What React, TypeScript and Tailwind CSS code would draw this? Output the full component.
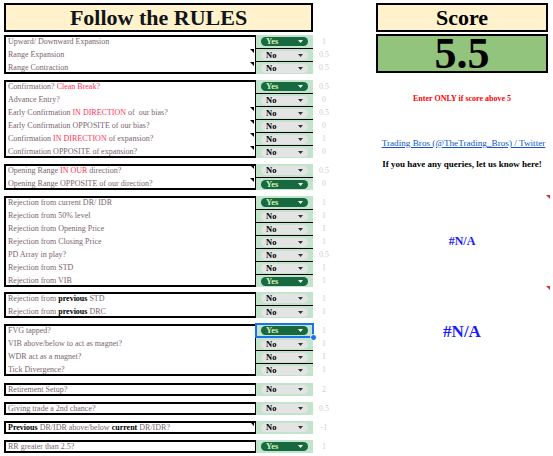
import type { ReactNode } from "react";

type Row = {
  label: ReactNode;
  yes: boolean;
  score: string;
  note?: boolean;
  selected?: boolean;
};

type Group = { mt: string; rows: Row[] };

const Red = ({ children }: { children: ReactNode }) => (
  <span className="text-[#ff3355]">{children}</span>
);

const B = ({ children }: { children: ReactNode }) => (
  <span className="font-bold text-black">{children}</span>
);

const groups: Group[] = [
  {
    mt: "mt-[3px]",
    rows: [
      { label: "Upward/ Downward Expansion", yes: true, score: "1" },
      { label: "Range Expansion", yes: false, score: "0.5", note: true },
      { label: "Range Contraction", yes: false, score: "0.5", note: true },
    ],
  },
  {
    mt: "mt-[6px]",
    rows: [
      {
        label: (
          <>
            Confirmation? <Red>Clean Break?</Red>
          </>
        ),
        yes: true,
        score: "0.5",
      },
      { label: "Advance Entry?", yes: false, score: "0" },
      {
        label: (
          <>
            Early Confirmation <Red>IN DIRECTION</Red> of&nbsp; our bias?
          </>
        ),
        yes: false,
        score: "0.5",
        note: true,
      },
      { label: "Early Confirmation OPPOSITE of our bias?", yes: false, score: "0", note: true },
      {
        label: (
          <>
            Confirmation <Red>IN DIRECTION</Red> of expansion?
          </>
        ),
        yes: false,
        score: "1",
        note: true,
      },
      { label: "Confirmation OPPOSITE of expansion?", yes: false, score: "0", note: true },
    ],
  },
  {
    mt: "mt-[6px]",
    rows: [
      {
        label: (
          <>
            Opening Range <Red>IN OUR</Red> direction?
          </>
        ),
        yes: false,
        score: "0.5",
        note: true,
      },
      { label: "Opening Range OPPOSITE of our direction?", yes: true, score: "0", note: true },
    ],
  },
  {
    mt: "mt-[6px]",
    rows: [
      { label: "Rejection from current DR/ IDR", yes: true, score: "1" },
      { label: "Rejection from 50% level", yes: false, score: "1" },
      { label: "Rejection from Opening Price", yes: false, score: "1" },
      { label: "Rejection from Closing Price", yes: false, score: "1" },
      { label: "PD Array in play?", yes: false, score: "0.5" },
      { label: "Rejection from STD", yes: false, score: "1" },
      { label: "Rejection from VIB", yes: true, score: "1" },
    ],
  },
  {
    mt: "mt-[5px]",
    rows: [
      {
        label: (
          <>
            Rejection from <B>previous</B> STD
          </>
        ),
        yes: false,
        score: "1",
      },
      {
        label: (
          <>
            Rejection from <B>previous</B> DRC
          </>
        ),
        yes: false,
        score: "1",
      },
    ],
  },
  {
    mt: "mt-[6px]",
    rows: [
      { label: "FVG tapped?", yes: true, score: "1", selected: true },
      { label: "VIB above/below to act as magnet?", yes: false, score: "1" },
      { label: "WDR act as a magnet?", yes: false, score: "1" },
      { label: "Tick Divergence?", yes: false, score: "1" },
    ],
  },
  { mt: "mt-[7px]", rows: [{ label: "Retirement Setup?", yes: false, score: "2" }] },
  { mt: "mt-[6px]", rows: [{ label: "Giving trade a 2nd chance?", yes: false, score: "0.5" }] },
  {
    mt: "mt-[6px]",
    rows: [
      {
        label: (
          <>
            <B>Previous</B> DR/IDR above/below <B>current</B> DR/IDR?
          </>
        ),
        yes: false,
        score: "-1",
        note: true,
      },
    ],
  },
  { mt: "mt-[6px]", rows: [{ label: "RR greater than 2.5?", yes: true, score: "1" }] },
];

function Chip({ yes }: { yes: boolean }) {
  return (
    <div
      className={
        yes
          ? "flex h-[9px] w-[47px] items-center justify-between rounded-full bg-[#17693f] pl-[5px] pr-[5px] text-[#d9f0b8]"
          : "flex h-[9px] w-[47px] items-center justify-between rounded-full bg-[#e4e4e4] pl-[5px] pr-[5px] text-black"
      }
    >
      <span className="text-[8.5px] font-bold leading-[9px]">{yes ? "Yes" : "No"}</span>
      <svg width="5" height="3" viewBox="0 0 5 3">
        <path d="M0 0h5L2.5 3z" fill={yes ? "#ffffff" : "#333333"} />
      </svg>
    </div>
  );
}

function RuleGroup({ group }: { group: Group }) {
  return (
    <div className={`flex ${group.mt}`}>
      <div className="w-[309px] outline-2 -outline-offset-2 outline-black">
        {group.rows.map((row, i) => (
          <div key={i} className="flex h-[13px]">
            <div className="relative w-[251px] overflow-hidden whitespace-nowrap pl-[4px] text-[8px] leading-[13px] text-[#7a6570]">
              {row.label}
              {row.note && (
                <div className="absolute right-[1px] top-[1px] h-0 w-0 border-l-[4px] border-t-[4px] border-l-transparent border-t-black" />
              )}
            </div>
            <div
              className={
                i === 0
                  ? "relative flex w-[58px] items-center justify-center border-l border-black bg-[#c3e4cc]"
                  : "relative flex w-[58px] items-center justify-center border-l border-t border-black bg-[#c3e4cc]"
              }
            >
              <Chip yes={row.yes} />
              {row.selected && (
                <>
                  <div className="absolute inset-0 z-10 outline-2 -outline-offset-1 outline-[#1a73e8]" />
                  <div className="absolute -bottom-[4px] -right-[4px] z-20 h-[7px] w-[7px] rounded-full border border-white bg-[#1a73e8]" />
                </>
              )}
            </div>
          </div>
        ))}
      </div>
      <div className="flex flex-col">
        {group.rows.map((row, i) => (
          <div key={i} className="h-[13px] w-[19px] pl-[3px] text-center text-[8px] leading-[13px] text-[#cfcfcf]">
            {row.score}
          </div>
        ))}
      </div>
    </div>
  );
}

export default function App() {
  return (
    <div className="flex h-[456px] w-[553px] overflow-hidden bg-white font-['Liberation_Serif','Times_New_Roman',serif]">
      <div className="flex w-[332px] flex-col pl-[4px] pt-[3px]">
        <div className="flex h-[29px] w-[309px] items-center justify-center bg-[#fff2cc] outline-2 -outline-offset-2 outline-black">
          <span className="text-[22px] font-bold leading-none text-[#101418]">Follow the RULES</span>
        </div>
        {groups.map((g, i) => (
          <RuleGroup key={i} group={g} />
        ))}
      </div>

      <div className="relative ml-[44px] flex w-[172px] flex-col items-center pt-[3px]">
        <div className="flex h-[29px] w-full items-center justify-center bg-[#fff2cc] outline-2 -outline-offset-2 outline-black">
          <span className="text-[22px] font-bold leading-none text-black">Score</span>
        </div>
        <div className="mt-[2px] flex h-[39px] w-full items-center justify-center bg-[#93c47d] outline-2 -outline-offset-2 outline-black">
          <span className="text-[44px] font-bold leading-none text-black">5.5</span>
        </div>

        <div className="mt-[20px] text-[8px] font-bold leading-[12px] text-[#ff0000]">
          Enter ONLY if score above 5
        </div>
        <div className="mt-[32px] whitespace-nowrap pl-[3px] text-[9.2px] leading-[13px] text-[#1155cc] underline">
          Trading Bros (@TheTrading_Bros) / Twitter
        </div>
        <div className="mt-[8px] whitespace-nowrap text-[9px] font-bold leading-[12px] text-black">
          If you have any queries, let us know here!
        </div>
        <div className="mt-[64px] text-[12px] font-bold leading-[14px] text-[#1a1aff]">#N/A</div>
        <div className="mt-[75px] text-[17px] font-bold leading-[18px] text-[#1a1aff]">#N/A</div>

        <div className="absolute right-[-2px] top-[195px] h-0 w-0 border-l-[4px] border-t-[4px] border-l-transparent border-t-[#d93025]" />
        <div className="absolute right-[-2px] top-[286px] h-0 w-0 border-l-[4px] border-t-[4px] border-l-transparent border-t-[#d93025]" />
      </div>
    </div>
  );
}
